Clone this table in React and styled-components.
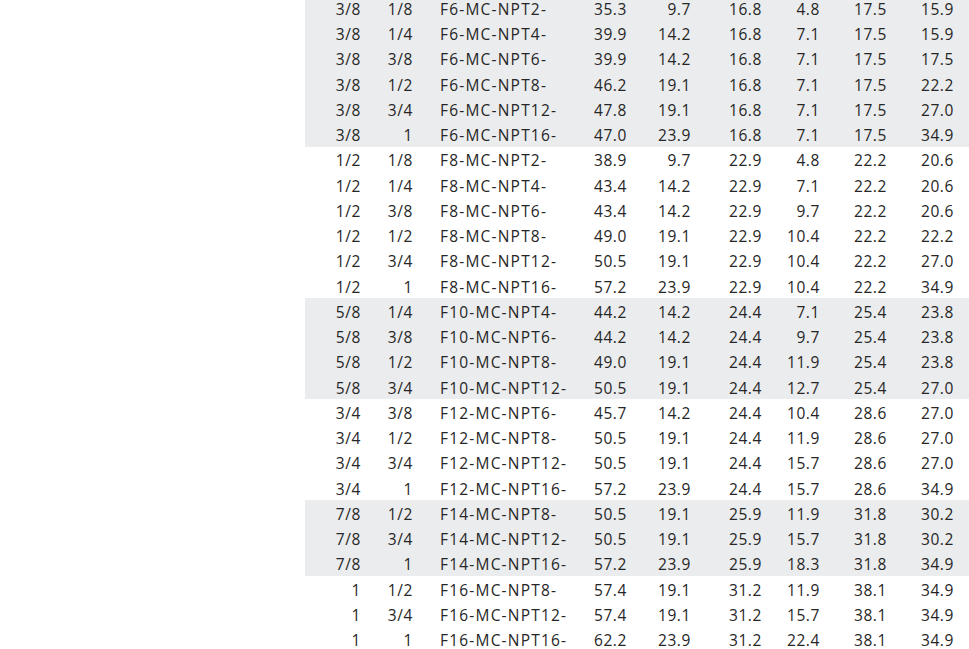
import React from 'react';
import styled, { createGlobalStyle } from 'styled-components';

const GlobalStyle = createGlobalStyle`
  html, body {
    margin: 0;
    padding: 0;
    background: #ffffff;
    overflow: hidden;
  }
`;

const groups = [
  [
    ['3/8', '1/8', 'F6-MC-NPT2-', '35.3', '9.7', '16.8', '4.8', '17.5', '15.9'],
    ['3/8', '1/4', 'F6-MC-NPT4-', '39.9', '14.2', '16.8', '7.1', '17.5', '15.9'],
    ['3/8', '3/8', 'F6-MC-NPT6-', '39.9', '14.2', '16.8', '7.1', '17.5', '17.5'],
    ['3/8', '1/2', 'F6-MC-NPT8-', '46.2', '19.1', '16.8', '7.1', '17.5', '22.2'],
    ['3/8', '3/4', 'F6-MC-NPT12-', '47.8', '19.1', '16.8', '7.1', '17.5', '27.0'],
    ['3/8', '1', 'F6-MC-NPT16-', '47.0', '23.9', '16.8', '7.1', '17.5', '34.9'],
  ],
  [
    ['1/2', '1/8', 'F8-MC-NPT2-', '38.9', '9.7', '22.9', '4.8', '22.2', '20.6'],
    ['1/2', '1/4', 'F8-MC-NPT4-', '43.4', '14.2', '22.9', '7.1', '22.2', '20.6'],
    ['1/2', '3/8', 'F8-MC-NPT6-', '43.4', '14.2', '22.9', '9.7', '22.2', '20.6'],
    ['1/2', '1/2', 'F8-MC-NPT8-', '49.0', '19.1', '22.9', '10.4', '22.2', '22.2'],
    ['1/2', '3/4', 'F8-MC-NPT12-', '50.5', '19.1', '22.9', '10.4', '22.2', '27.0'],
    ['1/2', '1', 'F8-MC-NPT16-', '57.2', '23.9', '22.9', '10.4', '22.2', '34.9'],
  ],
  [
    ['5/8', '1/4', 'F10-MC-NPT4-', '44.2', '14.2', '24.4', '7.1', '25.4', '23.8'],
    ['5/8', '3/8', 'F10-MC-NPT6-', '44.2', '14.2', '24.4', '9.7', '25.4', '23.8'],
    ['5/8', '1/2', 'F10-MC-NPT8-', '49.0', '19.1', '24.4', '11.9', '25.4', '23.8'],
    ['5/8', '3/4', 'F10-MC-NPT12-', '50.5', '19.1', '24.4', '12.7', '25.4', '27.0'],
  ],
  [
    ['3/4', '3/8', 'F12-MC-NPT6-', '45.7', '14.2', '24.4', '10.4', '28.6', '27.0'],
    ['3/4', '1/2', 'F12-MC-NPT8-', '50.5', '19.1', '24.4', '11.9', '28.6', '27.0'],
    ['3/4', '3/4', 'F12-MC-NPT12-', '50.5', '19.1', '24.4', '15.7', '28.6', '27.0'],
    ['3/4', '1', 'F12-MC-NPT16-', '57.2', '23.9', '24.4', '15.7', '28.6', '34.9'],
  ],
  [
    ['7/8', '1/2', 'F14-MC-NPT8-', '50.5', '19.1', '25.9', '11.9', '31.8', '30.2'],
    ['7/8', '3/4', 'F14-MC-NPT12-', '50.5', '19.1', '25.9', '15.7', '31.8', '30.2'],
    ['7/8', '1', 'F14-MC-NPT16-', '57.2', '23.9', '25.9', '18.3', '31.8', '34.9'],
  ],
  [
    ['1', '1/2', 'F16-MC-NPT8-', '57.4', '19.1', '31.2', '11.9', '38.1', '34.9'],
    ['1', '3/4', 'F16-MC-NPT12-', '57.4', '19.1', '31.2', '15.7', '38.1', '34.9'],
    ['1', '1', 'F16-MC-NPT16-', '62.2', '23.9', '31.2', '22.4', '38.1', '34.9'],
  ],
];

const Page = styled.div`
  display: flex;
  padding-left: 305px;
  font-family: "Open Sans", "Noto Sans", sans-serif;
  color: #262626;
`;

const Table = styled.div`
  flex: 1;
  display: flex;
  flex-direction: column;
`;

const Group = styled.div`
  background: ${props => (props.$shaded ? '#ebeced' : 'transparent')};
`;

const Row = styled.div`
  box-sizing: border-box;
  display: grid;
  grid-template-columns: 56px 52px 162px 52px 64px 71px 58px 67px 67px 1fr;
  height: ${props => (props.$first ? '20.25px' : '25.25px')};
  padding-top: ${props => (props.$first ? '0' : '4px')};
  align-items: center;
  font-size: 15.5px;
`;

const Cell = styled.span`
  text-align: right;
  letter-spacing: 0.6px;
  line-height: 1;
`;

const Part = styled.span`
  padding-left: 27px;
  letter-spacing: 1.2px;
  white-space: nowrap;
  line-height: 1;
`;

const App = () => (
  <>
    <GlobalStyle />
    <Page>
      <Table>
        {groups.map((rows, g) => (
          <Group key={g} $shaded={g % 2 === 0}>
            {rows.map((row, r) => (
              <Row key={row[2]} $first={g === 0 && r === 0}>
                <Cell>{row[0]}</Cell>
                <Cell>{row[1]}</Cell>
                <Part>{row[2]}</Part>
                {row.slice(3).map((value, i) => (
                  <Cell key={i}>{value}</Cell>
                ))}
              </Row>
            ))}
          </Group>
        ))}
      </Table>
    </Page>
  </>
);

export default App;
